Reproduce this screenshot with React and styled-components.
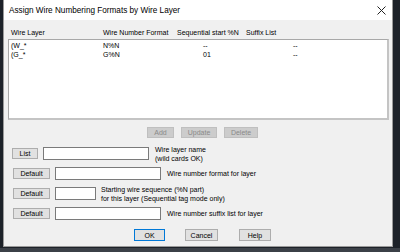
import React from 'react'
import styled, {createGlobalStyle} from 'styled-components'

const GlobalStyle = createGlobalStyle`
  html, body {
    margin: 0;
    padding: 0;
    background: #1d2229;
    width: 400px;
    height: 252px;
    overflow: hidden;
  }
  * { box-sizing: border-box; }
`

const Desktop = styled.div`
  width: 400px;
  height: 252px;
  padding-left: 3px;
  font-family: "Liberation Sans", Arial, sans-serif;
  background: linear-gradient(to bottom, #1d2229 0, #1d2229 248px, #3b4047 248px);
`

const Dialog = styled.div`
  width: 390px;
  height: 247px;
  background: #f0f0f0;
  border: 1px solid #9a9a9a;
  border-top: none;
  display: flex;
  flex-direction: column;
`

const TitleBar = styled.div`
  height: 20px;
  background: #ffffff;
  display: flex;
  align-items: center;
  justify-content: space-between;
  padding: 0 6px 0 5px;
  font-size: 8.2px;
  color: #000;
`

const Body = styled.div`
  padding: 6px 2px 0 4px;
  display: flex;
  flex-direction: column;
`

const HeaderRow = styled.div`
  display: flex;
  font-size: 7px;
  color: #000;
  height: 13px;
  align-items: center;
  padding-left: 3px;
`

const Col = styled.div`
  width: ${p => p.w}px;
  flex: none;
  white-space: nowrap;
`

const ListBox = styled.div`
  height: 81px;
  background: #fff;
  border: 1px solid #a8a8a8;
  border-bottom: 2px solid #c4c4c4;
  border-right: 2px solid #c4c4c4;
  padding: 1px 0 0 2px;
  font-size: 7px;
  margin-right: 1px;
`

const ListRow = styled.div`
  display: flex;
  height: 9px;
  align-items: center;
`

const ButtonBar = styled.div`
  display: flex;
  gap: 7px;
  padding-left: 139px;
  margin-top: 7px;
`

const Btn = styled.div`
  width: ${p => p.w}px;
  height: ${p => p.h || 11}px;
  background: ${p => (p.disabled ? '#cccccc' : '#e1e1e1')};
  border: 1px solid ${p => (p.primary ? '#0078d7' : p.disabled ? '#bfbfbf' : '#adadad')};
  color: ${p => (p.disabled ? '#8a8a8a' : '#000')};
  font-size: 7px;
  display: flex;
  align-items: center;
  justify-content: center;
  flex: none;
  margin-left: ${p => p.ml || 0}px;
`

const FormRow = styled.div`
  display: flex;
  align-items: center;
  height: 13px;
  margin-top: ${p => p.mt}px;
  padding-left: ${p => p.pl || 5}px;
`

const TextBox = styled.div`
  width: ${p => p.w}px;
  height: 13px;
  background: #fff;
  border: 1px solid #7a7a7a;
  margin-left: ${p => p.ml}px;
  flex: none;
`

const Label = styled.div`
  font-size: 7px;
  line-height: 9px;
  color: #000;
  margin-left: ${p => p.ml}px;
  white-space: nowrap;
`

const Footer = styled.div`
  display: flex;
  padding-left: 126px;
  margin-top: 9px;
`

const Close = () => (
  <svg width="9" height="9" viewBox="0 0 9 9">
    <path d="M0.5 0.5 L8.5 8.5 M8.5 0.5 L0.5 8.5" stroke="#222" strokeWidth="1" />
  </svg>
)

const rows = [
  ['(W_*', 'N%N', '--', '--'],
  ['(G_*', 'G%N', '01', '--'],
]

export default function App() {
  return (
    <Desktop>
      <GlobalStyle />
      <Dialog>
        <TitleBar>
          <span>Assign Wire Numbering Formats by Wire Layer</span>
          <Close />
        </TitleBar>
        <Body>
          <HeaderRow>
            <Col w={92}>Wire Layer</Col>
            <Col w={74}>Wire Number Format</Col>
            <Col w={69}>Sequential start %N</Col>
            <Col w={60}>Suffix List</Col>
          </HeaderRow>
          <ListBox>
            {rows.map((r, i) => (
              <ListRow key={i}>
                <Col w={92}>{r[0]}</Col>
                <Col w={100}>{r[1]}</Col>
                <Col w={90}>{r[2]}</Col>
                <Col w={40}>{r[3]}</Col>
              </ListRow>
            ))}
          </ListBox>
          <ButtonBar>
            <Btn w={27} disabled>Add</Btn>
            <Btn w={36} disabled>Update</Btn>
            <Btn w={34} disabled>Delete</Btn>
          </ButtonBar>
          <FormRow mt={9} pl={4}>
            <Btn w={26}>List</Btn>
            <TextBox w={106} ml={5} />
            <Label ml={6}>Wire layer name<br />(wild cards OK)</Label>
          </FormRow>
          <FormRow mt={7}>
            <Btn w={37}>Default</Btn>
            <TextBox w={106} ml={5} />
            <Label ml={6}>Wire number format for layer</Label>
          </FormRow>
          <FormRow mt={7}>
            <Btn w={37}>Default</Btn>
            <TextBox w={41} ml={5} />
            <Label ml={5}>Starting wire sequence (%N part)<br />for this layer (Sequential tag mode only)</Label>
          </FormRow>
          <FormRow mt={7}>
            <Btn w={37}>Default</Btn>
            <TextBox w={106} ml={5} />
            <Label ml={6}>Wire number suffix list for layer</Label>
          </FormRow>
          <Footer>
            <Btn w={31} h={12} primary>OK</Btn>
            <Btn w={33} h={12} ml={20}>Cancel</Btn>
            <Btn w={32} h={12} ml={21}>Help</Btn>
          </Footer>
        </Body>
      </Dialog>
    </Desktop>
  )
}
